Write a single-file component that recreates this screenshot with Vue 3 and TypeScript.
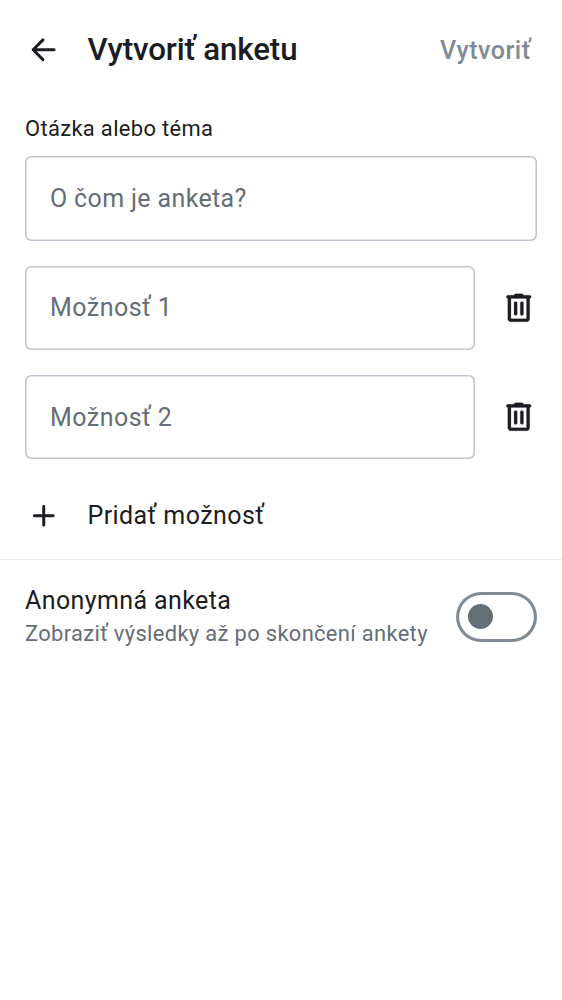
<script setup lang="ts">
import { ref } from 'vue'

const question = ref('')
const options = ref<string[]>(['', ''])
const anonymous = ref(false)

const addOption = () => options.value.push('')
const removeOption = (index: number) => options.value.splice(index, 1)
</script>

<template>
  <main class="screen">
    <header class="bar">
      <button class="icon-button" type="button" aria-label="Späť">
        <svg class="icon" viewBox="0 0 24 24">
          <path class="line" d="M18.6 12H5.2M11.5 5.7L5.2 12l6.3 6.3" />
        </svg>
      </button>
      <h1 class="title">Vytvoriť anketu</h1>
      <button class="create" type="button">Vytvoriť</button>
    </header>

    <form class="form" @submit.prevent>
      <label class="label" for="question">Otázka alebo téma</label>
      <input id="question" v-model="question" class="field" placeholder="O čom je anketa?" />

      <div v-for="(_, index) in options" :key="index" class="option">
        <input v-model="options[index]" class="field" :placeholder="`Možnosť ${index + 1}`" />
        <button class="icon-button" type="button" aria-label="Odstrániť" @click="removeOption(index)">
          <svg class="icon" viewBox="0 0 24 24">
            <path
              fill="currentColor"
              stroke="currentColor"
              stroke-width="0.15"
              fill-rule="evenodd"
              d="M7 21q-.824 0-1.412-.587A1.93 1.93 0 0 1 5 19V6a.97.97 0 0 1-.713-.287A.97.97 0 0 1 4 5q0-.424.287-.713A.97.97 0 0 1 5 4h4q0-.424.287-.712A.97.97 0 0 1 10 3h4q.424 0 .713.288Q15 3.575 15 4h4q.424 0 .712.287Q20 4.576 20 5t-.288.713A.97.97 0 0 1 19 6v13q0 .824-.587 1.413A1.93 1.93 0 0 1 17 21zM7 6v13h10V6zm2 10q0 .424.287.712Q9.576 17 10 17t.713-.288A.97.97 0 0 0 11 16V9a.97.97 0 0 0-.287-.713A.97.97 0 0 0 10 8a.97.97 0 0 0-.713.287A.97.97 0 0 0 9 9zm4 0q0 .424.287.712.288.288.713.288.424 0 .713-.288A.97.97 0 0 0 15 16V9a.97.97 0 0 0-.287-.713A.97.97 0 0 0 14 8a.97.97 0 0 0-.713.287A.97.97 0 0 0 13 9z"
            />
          </svg>
        </button>
      </div>

      <button class="add" type="button" @click="addOption">
        <svg class="icon" viewBox="0 0 24 24">
          <path class="line" d="M12 6v12M6 12h12" />
        </svg>
        <span>Pridať možnosť</span>
      </button>
    </form>

    <section class="setting">
      <div class="setting-text">
        <div class="setting-title">Anonymná anketa</div>
        <div class="setting-note">Zobraziť výsledky až po skončení ankety</div>
      </div>
      <button
        class="switch"
        :class="{ on: anonymous }"
        type="button"
        role="switch"
        aria-label="Anonymná anketa"
        :aria-checked="anonymous"
        @click="anonymous = !anonymous"
      >
        <span class="knob"></span>
      </button>
    </section>
  </main>
</template>

<style>
body {
  background: #fff;
}
</style>

<style scoped>
.screen {
  box-sizing: border-box;
  min-height: 1000px;
  background: #fff;
  color: #1b1d22;
  font-family: Roboto, sans-serif;
}

button {
  padding: 0;
  border: 0;
  background: none;
  color: inherit;
  font: inherit;
}

.icon-button {
  flex: none;
  display: flex;
}

.icon {
  flex: none;
  display: block;
  width: 37.5px;
  height: 37.5px;
}

.line {
  fill: none;
  stroke: currentColor;
  stroke-width: 1.9;
  stroke-linecap: round;
  stroke-linejoin: round;
}

.bar {
  box-sizing: border-box;
  height: 100px;
  padding: 0 31px 0 25px;
  display: flex;
  align-items: center;
}

.title {
  flex: 1;
  margin: 0 0 0 25px;
  font-size: 31.25px;
  line-height: 42px;
  font-weight: 500;
  letter-spacing: -0.09px;
}

.create {
  color: #818a95;
  font-size: 25px;
  line-height: 36px;
  padding-top: 1px;
  font-weight: 500;
  letter-spacing: 0.5px;
}

.form {
  padding: 12.6px 25px 0;
}

.label {
  display: block;
  height: 43.6px;
  font-size: 21.9px;
  line-height: 31px;
  letter-spacing: 0.35px;
}

.field {
  box-sizing: border-box;
  display: block;
  width: 100%;
  height: 84.4px;
  padding: 0 25px;
  border: 0;
  border-radius: 6.25px;
  box-shadow: inset 0 0 0 1.56px #bfc5d0;
  outline: 0;
  background: #fff;
  color: #1b1d22;
  font: 400 25px/37.5px Roboto, sans-serif;
  letter-spacing: 0.36px;
}

.field::placeholder {
  color: #656d77;
  opacity: 1;
}

.option {
  display: flex;
  align-items: center;
  gap: 25px;
  margin-top: 25px;
}

.option .field {
  letter-spacing: 0.46px;
}

.add {
  display: flex;
  align-items: center;
  gap: 25px;
  margin-top: 37.6px;
  font-size: 25px;
  line-height: 37.5px;
  letter-spacing: 0.42px;
}

.setting {
  display: flex;
  align-items: center;
  justify-content: space-between;
  box-sizing: border-box;
  height: 114.4px;
  margin-top: 24.6px;
  padding: 0 25px;
  border-top: 1px solid #e8ebf0;
}

.setting-text {
  padding-bottom: 3px;
}

.setting-title {
  font-size: 25px;
  line-height: 37px;
  letter-spacing: 0.39px;
}

.setting-note {
  color: #656d77;
  font-size: 21.9px;
  line-height: 29px;
  letter-spacing: 0.34px;
}

.switch {
  box-sizing: border-box;
  flex: none;
  display: flex;
  align-items: center;
  width: 81px;
  height: 50px;
  padding: 0 12px;
  border-radius: 25px;
  box-shadow: inset 0 0 0 3.12px #818a95;
}

.switch.on {
  justify-content: flex-end;
}

.knob {
  width: 25px;
  height: 25px;
  border-radius: 50%;
  background: #656d77;
}
</style>
